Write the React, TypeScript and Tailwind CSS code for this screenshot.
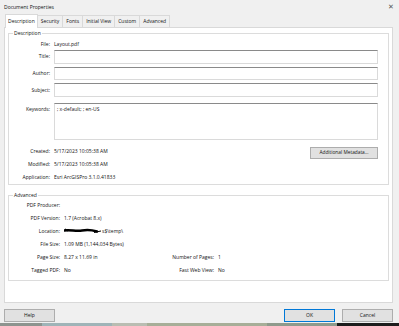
import React from 'react';

const Row: React.FC<{ label: string; w: string; children?: React.ReactNode }> = ({ label, w, children }) => (
  <div className="flex items-center h-[12.9px]">
    <span className={`${w} text-right shrink-0`}>{label}</span>
    <span className="ml-[4px] whitespace-nowrap">{children}</span>
  </div>
);

const Field: React.FC<{ label: string; tall?: boolean; value?: string }> = ({ label, tall, value }) => (
  <div className={`flex ${tall ? 'items-start h-[37px]' : 'items-center h-[13.5px]'}`}>
    <span className={`w-[40px] text-right shrink-0 ${tall ? 'mt-[4px]' : ''}`}>{label}</span>
    <div
      className={`ml-[4px] flex-1 bg-white border border-[#dadada] border-t-[#8a8a8a] ${tall ? 'h-[37px] pt-[3px]' : 'h-[13.5px]'} px-[2px]`}
    >
      {value}
    </div>
  </div>
);

export default function App() {
  return (
    <div className="w-[399px] h-[326px] bg-[#f0f0f0] overflow-hidden flex flex-col text-[5px] text-[#111] font-['Open_Sans',sans-serif] leading-none">
      {/* title bar */}
      <div className="h-[14px] flex items-center justify-between pl-[4px] pr-[5px]">
        <span>Document Properties</span>
        <span className="text-[6.5px] text-[#555]">✕</span>
      </div>

      {/* tabs */}
      <div className="h-[13px] flex items-end pl-[5px]">
        <div className="h-[14px] px-[2px] flex items-center bg-white border border-b-0 border-[#d9d9d9] relative top-[1px]">Description</div>
        {['Security', 'Fonts', 'Initial View', 'Custom', 'Advanced'].map((t) => (
          <div key={t} className="h-[12px] px-[3px] flex items-center bg-[#f0f0f0] border border-l-0 border-b-0 border-[#d9d9d9]">
            {t}
          </div>
        ))}
      </div>

      {/* panel */}
      <div className="mx-[4px] w-[389px] h-[276px] bg-white border border-[#d9d9d9] px-[3px] pt-[3px]">
        <fieldset className="border border-[#dcdcdc] h-[154px] px-[1px] pr-[10px]">
          <legend className="ml-[3px] px-[1px]">Description</legend>
          <div className="flex items-center h-[12px] mt-[2px]">
            <span className="w-[40px] text-right">File:</span>
            <span className="ml-[4px]">Layout.pdf</span>
          </div>
          <div className="flex flex-col gap-[3.2px]">
            <Field label="Title:" />
            <Field label="Author:" />
            <Field label="Subject:" />
            <div className="mt-[2.5px]">
              <Field label="Keywords:" tall value="; x-default; ; en-US" />
            </div>
          </div>
          <div className="flex justify-between mt-[6px]">
            <div className="flex flex-col">
              <div className="flex items-center h-[12.6px]">
                <span className="w-[40px] text-right">Created:</span>
                <span className="ml-[4px]">5/17/2023 10:05:38 AM</span>
              </div>
              <div className="flex items-center h-[12.6px]">
                <span className="w-[40px] text-right">Modified:</span>
                <span className="ml-[4px]">5/17/2023 10:05:38 AM</span>
              </div>
              <div className="flex items-center h-[12.6px]">
                <span className="w-[40px] text-right">Application:</span>
                <span className="ml-[4px]">Esri ArcGISPro 3.1.0.41833</span>
              </div>
            </div>
            <button className="mt-[1px] w-[68px] h-[12px] bg-[#e1e1e1] border border-[#adadad] text-[4.8px]">
              Additional Metadata...
            </button>
          </div>
        </fieldset>

        <fieldset className="border border-[#dcdcdc] h-[88px] mt-[8px] px-[1px]">
          <legend className="ml-[3px] px-[1px]">Advanced</legend>
          <div className="flex mt-[1.5px]">
            <div className="flex flex-col w-[150px]">
              <Row label="PDF Producer:" w="w-[50px]" />
              <Row label="PDF Version:" w="w-[50px]">1.7 (Acrobat 8.x)</Row>
              <Row label="Location:" w="w-[50px]">
                <span className="inline-flex items-center">
                  <svg width="38" height="6" viewBox="0 0 38 6">
                    <path d="M0 2.5 C6 1.5 12 3.5 18 2.5 S28 2 33 3.5" stroke="#000" strokeWidth="2.6" fill="none" strokeLinecap="round" />
                    <path d="M1 1 L4 3" stroke="#000" strokeWidth="1.2" />
                    <path d="M30 4.5 L37 3" stroke="#000" strokeWidth="1" />
                  </svg>
                  <span>s$\temp\</span>
                </span>
              </Row>
              <Row label="File Size:" w="w-[50px]">1.09 MB (1,144,034 Bytes)</Row>
              <Row label="Page Size:" w="w-[50px]">8.27 x 11.69 in</Row>
              <Row label="Tagged PDF:" w="w-[50px]">No</Row>
            </div>
            <div className="flex flex-col mt-[51.6px]">
              <Row label="Number of Pages:" w="w-[54px]">1</Row>
              <Row label="Fast Web View:" w="w-[54px]">No</Row>
            </div>
          </div>
        </fieldset>
      </div>

      {/* buttons */}
      <div className="flex justify-between items-center mt-[6px] h-[13px] pl-[4px] pr-[6px]">
        <button className="w-[51px] h-[13px] bg-[#e1e1e1] border border-[#adadad]">Help</button>
        <div className="flex gap-[7px]">
          <button className="w-[51px] h-[13px] bg-[#e1e1e1] border border-[#0078d7]">OK</button>
          <button className="w-[51px] h-[13px] bg-[#e1e1e1] border border-[#adadad]">Cancel</button>
        </div>
      </div>

      {/* desktop strip */}
      <div className="mt-[1px] h-[3px] flex">
        <div className="w-[42px] bg-[#8d948f]" />
        <div className="w-[70px] bg-[#9fb4b8]" />
        <div className="w-[35px] bg-[#b9bdb2]" />
        <div className="w-[120px] bg-[#a7ae98]" />
        <div className="w-[70px] bg-[#8f9a8c]" />
        <div className="flex-1 bg-[#1d1d1d]" />
      </div>
    </div>
  );
}
